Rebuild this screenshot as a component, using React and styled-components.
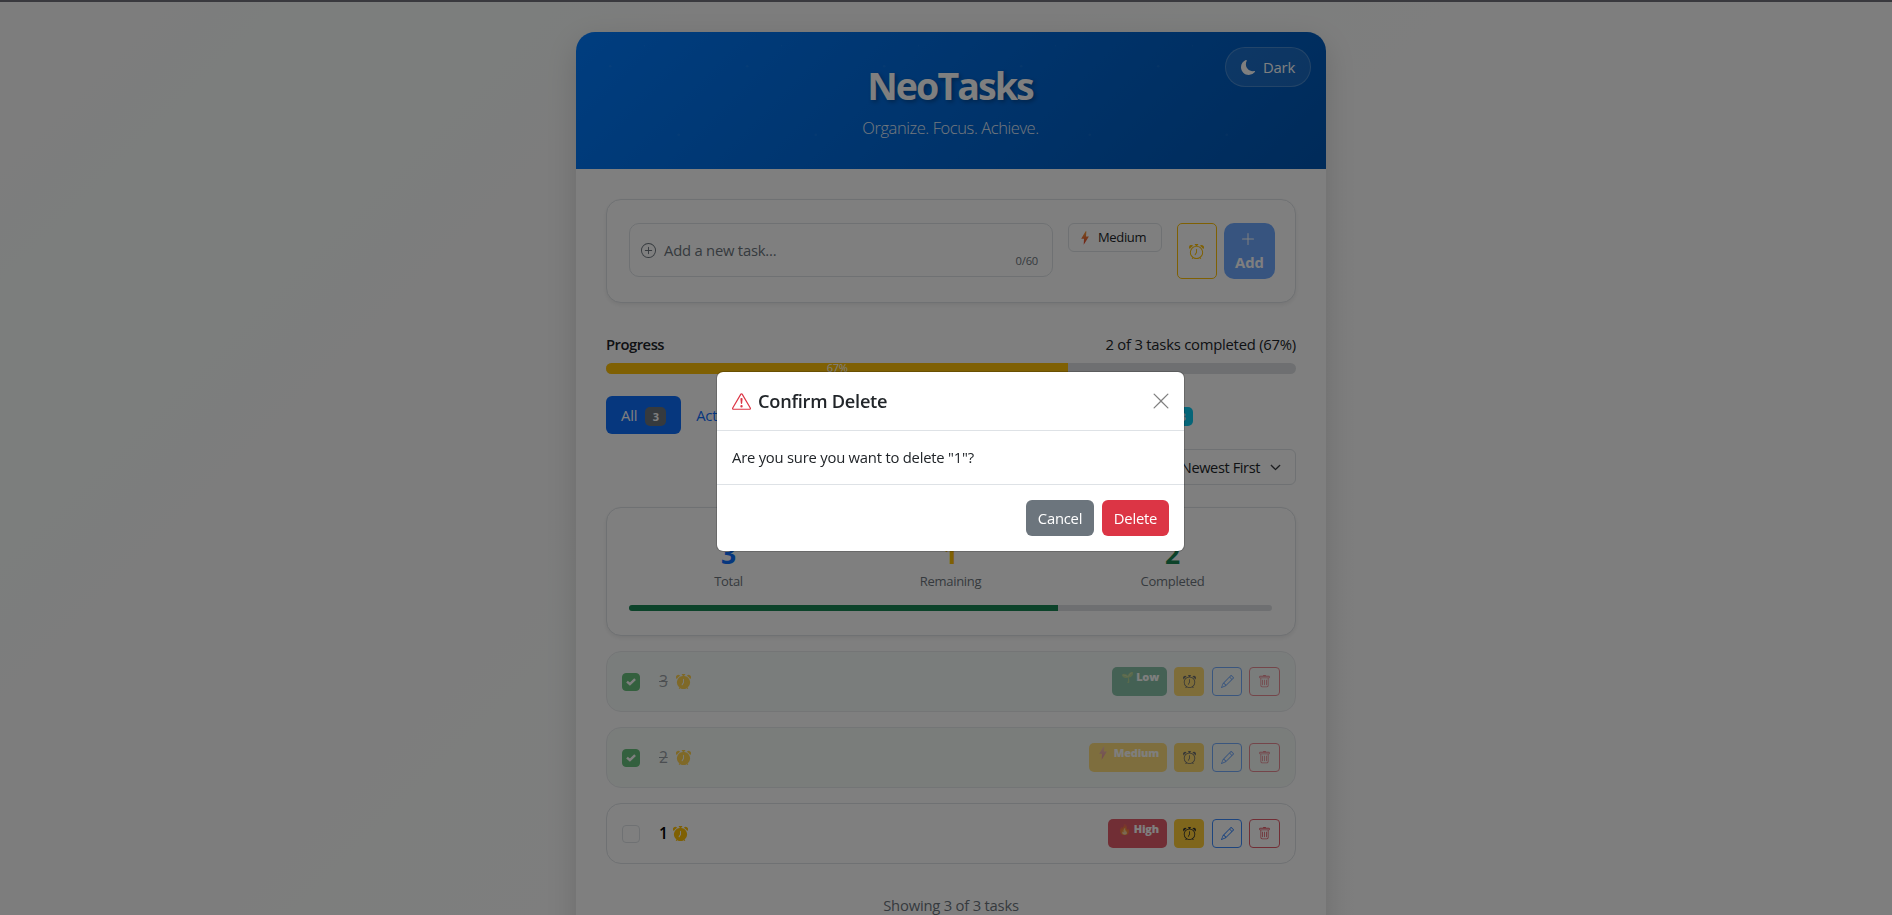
import React from 'react';
import styled, { createGlobalStyle, css } from 'styled-components';
import {
  BsMoonFill, BsPlusCircle, BsAlarm, BsAlarmFill, BsPlusLg, BsPencil, BsTrash,
  BsExclamationTriangle, BsXLg, BsChevronDown,
} from 'react-icons/bs';

const Global = createGlobalStyle`
  *, *::before, *::after { box-sizing: border-box; }
  html, body { height: 100%; overflow: hidden; }
  body {
    margin: 0;
    font-family: "Open Sans", "Noto Sans", sans-serif;
    font-size: 14.8px;
    line-height: 23px;
    letter-spacing: -0.22px;
    color: #212529;
  }
  button { font: inherit; letter-spacing: inherit; margin: 0; }
  h1, h2, p { margin: 0; }
  svg { display: block; flex: none; }
`;

const Page = styled.div`
  height: 100vh;
  overflow: hidden;
  border-top: 2px solid #73737d;
  padding: 30px 0 0 10px;
  background: linear-gradient(135deg, #fafafa 6%, #f8fcfa 10%, #f8fcfa 20%, #fafafa 25%, #fafafa 38%, #fafcfb 43%, #fcfcfc 52%, #fdfdfd 100%);
`;

const Card = styled.main`
  width: 750px;
  min-height: 1000px;
  margin: 0 auto;
  border-radius: 19px;
  overflow: hidden;
  background: #fff;
  box-shadow: 0 10px 30px rgba(0, 0, 0, 0.15);
`;

const Header = styled.header`
  position: relative;
  height: 137px;
  padding-top: 30px;
  text-align: center;
  color: #fff;
  background: linear-gradient(135deg, #007bff, #0056b3);
`;

const Grain = styled.svg`
  position: absolute;
  inset: 0;
`;

const Title = styled.h1`
  position: relative;
  padding-right: 2px;
  font-size: 37.5px;
  line-height: 48px;
  font-weight: 700;
  letter-spacing: -1.9px;
  text-shadow: 2px 2px 4px rgba(0, 0, 0, 0.3);
`;

const Subtitle = styled.p`
  position: relative;
  margin-top: 5px;
  padding-right: 1px;
  font-size: 16.5px;
  line-height: 26px;
  font-weight: 350;
  letter-spacing: -0.42px;
  opacity: 0.9;
`;

const ThemeButton = styled.button`
  position: absolute;
  top: 15px;
  right: 15px;
  display: flex;
  align-items: center;
  gap: 7px;
  height: 40px;
  padding: 0 15px;
  border: 1px solid rgba(255, 255, 255, 0.2);
  border-radius: 20px;
  background: rgba(255, 255, 255, 0.1);
  color: #fff;
`;

const Body = styled.div`
  padding: 30px;
`;

const Panel = styled.section`
  border: 1px solid #dee2e6;
  border-radius: 15px;
  padding: 23px 22px 0;
  background: #fff;
  box-shadow: 0 2px 4px rgba(0, 0, 0, 0.075);
`;

const Composer = styled(Panel)`
  display: flex;
  align-items: flex-start;
  height: 104px;
  padding-right: 20px;
`;

const TaskInput = styled.div`
  display: flex;
  align-items: center;
  gap: 8px;
  width: 424px;
  height: 54px;
  padding: 0 14px 0 11px;
  border: 1px solid #dee2e6;
  border-radius: 10px;
  color: #6c757d;
`;

const Counter = styled.span`
  align-self: flex-end;
  margin-left: auto;
  margin-bottom: 6px;
  font-size: 11.2px;
  line-height: 18px;
`;

const PrioritySelect = styled.div`
  display: flex;
  align-items: center;
  width: 94px;
  height: 29px;
  margin-left: 15px;
  padding-left: 7px;
  border: 1px solid #dee2e6;
  border-radius: 6px;
  font-size: 13px;
  letter-spacing: -0.35px;
`;

const Emoji = styled.span`
  display: inline-block;
  width: ${(p) => p.$width}px;
  font-size: ${(p) => p.$size}px;
  letter-spacing: 0;
  text-align: center;
  opacity: 0.75;
`;

const BoltIcon = styled.svg`
  width: 8px;
  height: 14px;
  margin: 0 ${(p) => p.$after}px 0 ${(p) => p.$before}px;
`;

const ReminderButton = styled.button`
  display: grid;
  place-items: center;
  width: 40px;
  height: 56px;
  margin-left: 15px;
  padding: 0 1px 0 0;
  border: 1px solid #ffc107;
  border-radius: 5px;
  background: transparent;
  color: #ffc107;
`;

const AddButton = styled.button`
  display: flex;
  flex-direction: column;
  align-items: center;
  width: 51px;
  height: 56px;
  margin-left: 7px;
  padding: 8px 0 0;
  border: 0;
  border-radius: 10px;
  background: #6ea8fe;
  color: #fff;
  font-weight: 700;
  letter-spacing: 0;
  line-height: 23px;
  gap: 4px;
  svg { margin-right: 3px; }
`;

const ProgressHead = styled.div`
  display: flex;
  justify-content: space-between;
  margin-top: 30px;
`;

const ProgressLabel = styled.span`
  font-weight: 600;
  letter-spacing: -0.5px;
`;

const Track = styled.div`
  height: ${(p) => p.$height}px;
  margin-top: ${(p) => p.$gap}px;
  border-radius: 6px;
  overflow: hidden;
  background: #dcdfe2;
`;

const Fill = styled.div`
  height: 100%;
  background: ${(p) => p.$color};
  color: #fff;
  font-size: 11px;
  line-height: 10px;
  text-align: center;
`;

const Tabs = styled.nav`
  display: flex;
  align-items: center;
  width: 602px;
  height: 38px;
  margin-top: 22px;
`;

const Tab = styled.button`
  display: flex;
  align-items: center;
  gap: 8px;
  height: 38px;
  padding: 0 15px;
  border: 0;
  border-radius: 6px;
  background: ${(p) => (p.$active ? '#0d6efd' : 'transparent')};
  color: ${(p) => (p.$active ? '#fff' : '#0d6efd')};
  &:last-child { margin-left: auto; }
`;

const Badge = styled.span`
  width: 21px;
  margin-top: 2px;
  border-radius: 5px;
  background: ${(p) => p.$bg};
  color: #fff;
  font-size: 11px;
  font-weight: 700;
  line-height: 19px;
  text-align: center;
`;

const SortSelect = styled.div`
  display: flex;
  align-items: center;
  justify-content: flex-end;
  gap: 10px;
  width: 166px;
  height: 36px;
  margin: 15px 0 0 auto;
  padding-right: 14px;
  border: 1px solid #dee2e6;
  border-radius: 6px;
  font-size: 14.6px;
  letter-spacing: -0.4px;
`;

const Stats = styled(Panel)`
  height: 129px;
  margin-top: 22px;
  padding: 29px 23px 0 22px;
`;

const StatRow = styled.div`
  display: grid;
  grid-template-columns: repeat(3, 222px);
  justify-content: center;
  text-align: center;
`;

const StatValue = styled.div`
  font-size: 26.5px;
  line-height: 34px;
  font-weight: 700;
  color: ${(p) => p.$color};
`;

const StatLabel = styled.div`
  font-size: 13px;
  line-height: 20px;
  letter-spacing: -0.3px;
  color: #6c757d;
`;

const TaskRow = styled.article`
  display: flex;
  align-items: center;
  height: 61px;
  margin-top: 15px;
  padding: 0 15px;
  border: 1px solid #dee2e6;
  border-radius: 15px;
  ${(p) => p.$done && css`
    background: #f1f8f5;
    opacity: 0.7;
  `}
`;

const Checkbox = styled.span`
  display: grid;
  place-items: center;
  width: 18px;
  height: 18px;
  border-radius: 4px;
  border: 1px solid ${(p) => (p.$checked ? '#28a745' : '#dee2e6')};
  background: ${(p) => (p.$checked ? '#28a745' : '#fff')};
`;

const TaskName = styled.span`
  display: flex;
  align-items: center;
  gap: ${(p) => (p.$done ? 8 : 5)}px;
  margin-left: 19px;
  font-size: 15.6px;
  font-weight: ${(p) => (p.$done ? 500 : 600)};
  color: ${(p) => (p.$done ? '#6c757d' : '#000')};
  svg { color: #ffc107; }
`;

const Actions = styled.div`
  display: flex;
  align-items: stretch;
  height: 29px;
  margin-left: auto;
  opacity: 0.8;
`;

const Priority = styled.span`
  display: flex;
  align-items: center;
  height: 29px;
  padding: 0 8px 9px ${(p) => p.$pad}px;
  border-radius: 5px;
  background: ${(p) => p.$bg};
  color: #fff;
  font-size: 11px;
  font-weight: 800;
  line-height: 18px;
  letter-spacing: -0.2px;
`;

const IconButton = styled.button`
  display: grid;
  place-items: center;
  width: ${(p) => p.$width || 30}px;
  margin-left: ${(p) => p.$gap || 7}px;
  padding: 0;
  border: 1px solid ${(p) => p.$color};
  border-radius: 4px;
  background: ${(p) => (p.$solid ? p.$color : 'transparent')};
  color: ${(p) => (p.$solid ? '#000' : p.$color)};
`;

const Showing = styled.p`
  margin-top: 30px;
  text-align: center;
  color: #6c757d;
`;

const Backdrop = styled.div`
  position: fixed;
  inset: 0;
  display: flex;
  justify-content: center;
  align-items: flex-start;
  padding: 371px 0 0 9px;
  background: rgba(0, 0, 0, 0.5);
`;

const Dialog = styled.div`
  width: 469px;
  border: 1px solid rgba(0, 0, 0, 0.175);
  border-radius: 7px;
  background: #fff;
  background-clip: padding-box;
`;

const DialogHeader = styled.div`
  display: flex;
  align-items: center;
  height: 59px;
  padding: 0 15px;
  border-bottom: 1px solid #dee2e6;
`;

const CloseIcon = styled(BsXLg)`
  margin: 0 -2px 0 auto;
  color: rgba(0, 0, 0, 0.5);
`;

const DialogTitle = styled.h2`
  display: flex;
  align-items: center;
  gap: 7px;
  font-size: 18.2px;
  line-height: 28px;
  font-weight: 550;
  letter-spacing: -0.25px;
  svg { color: #dc3545; }
`;

const DialogBody = styled.p`
  height: 54px;
  padding: 15px;
  border-bottom: 1px solid #dee2e6;
`;

const DialogFooter = styled.div`
  display: flex;
  justify-content: flex-end;
  gap: 8px;
  height: 66px;
  padding: 15px;
`;

const DialogButton = styled.button`
  width: ${(p) => p.$width}px;
  height: 36px;
  padding: 0;
  border: 0;
  border-radius: 6px;
  background: ${(p) => p.$bg};
  color: #fff;
`;

const GRAIN_TILES = [0, 1, 2, 3, 4, 5];

function HeaderGrain() {
  return (
    <Grain width="750" height="137" fill="#fff">
      {GRAIN_TILES.map((n) => (
        <g key={n} transform={`translate(${n * 137} 0) scale(1.37)`}>
          <circle cx="25" cy="25" r="1" opacity="0.05" />
          <circle cx="75" cy="75" r="1" opacity="0.05" />
          <circle cx="50" cy="10" r="0.5" opacity="0.05" />
        </g>
      ))}
    </Grain>
  );
}

function Bolt({ id, top, bottom, before, after }) {
  return (
    <BoltIcon viewBox="0 0 8 14" $before={before} $after={after}>
      <defs>
        <linearGradient id={id} x1="0" y1="0" x2="0" y2="1">
          <stop offset="0" stopColor={top} />
          <stop offset="1" stopColor={bottom} />
        </linearGradient>
      </defs>
      <path d="M4.6 0.3 0.2 7.8H3L2.7 13.7 7.9 5.6H5L5.4 0.3Z" fill={`url(#${id})`} />
    </BoltIcon>
  );
}

function Check() {
  return (
    <svg width="10" height="8" viewBox="0 0 10 8" fill="none" stroke="#fff" strokeWidth="2.4">
      <path d="M1 3.6 3.9 6.2 9.1 1.2" />
    </svg>
  );
}

const TASKS = [
  { name: '3', done: true, priority: 'Low' },
  { name: '2', done: true, priority: 'Medium' },
  { name: '1', done: false, priority: 'High' },
];

function PriorityBadge({ level }) {
  if (level === 'Low') {
    return <Priority $bg="#30946a" $pad={7}><Emoji $size={10.5} $width={17}>🌱</Emoji>Low</Priority>;
  }
  if (level === 'Medium') {
    return (
      <Priority $bg="#ffc71c" $pad={10}>
        <Bolt id="bolt-badge" top="#f3a36a" bottom="#d8455f" before={0} after={7} />Medium
      </Priority>
    );
  }
  return <Priority $bg="#dc3545" $pad={7}><Emoji $size={10.5} $width={19}>🔥</Emoji>High</Priority>;
}

function Task({ task }) {
  return (
    <TaskRow $done={task.done}>
      <Checkbox $checked={task.done}>{task.done && <Check />}</Checkbox>
      <TaskName $done={task.done}>
        {task.done ? <s>{task.name}</s> : <span>{task.name}</span>}
        <BsAlarmFill size={15} />
      </TaskName>
      <Actions>
        <PriorityBadge level={task.priority} />
        <IconButton $color="#ffc107" $solid><BsAlarm size={13} /></IconButton>
        <IconButton $color="#0d6efd" $gap={8}><BsPencil size={13} /></IconButton>
        <IconButton $color="#dc3545" $width={31}><BsTrash size={13} /></IconButton>
      </Actions>
    </TaskRow>
  );
}

export default function App() {
  return (
    <>
      <Global />
      <Page>
        <Card>
          <Header>
            <HeaderGrain />
            <Title>NeoTasks</Title>
            <Subtitle>Organize. Focus. Achieve.</Subtitle>
            <ThemeButton><BsMoonFill size={15} />Dark</ThemeButton>
          </Header>
          <Body>
            <Composer>
              <TaskInput>
                <BsPlusCircle size={15} />
                <span>Add a new task...</span>
                <Counter>0/60</Counter>
              </TaskInput>
              <PrioritySelect>
                <Bolt id="bolt-select" top="#f9a13c" bottom="#e0402f" before={5} after={9} />Medium
              </PrioritySelect>
              <ReminderButton><BsAlarm size={15} /></ReminderButton>
              <AddButton><BsPlusLg size={16} />Add</AddButton>
            </Composer>

            <ProgressHead>
              <ProgressLabel>Progress</ProgressLabel>
              <span>2 of 3 tasks completed (67%)</span>
            </ProgressHead>
            <Track $height={11} $gap={7}>
              <Fill $color="#ffc107" style={{ width: '67%' }}>67%</Fill>
            </Track>

            <Tabs>
              <Tab $active>All<Badge $bg="#6c757d">3</Badge></Tab>
              <Tab>Active<Badge $bg="#ffc107">1</Badge></Tab>
              <Tab>Completed<Badge $bg="#198754">2</Badge></Tab>
              <Tab>Reminders<Badge $bg="#0dcaf0">3</Badge></Tab>
            </Tabs>
            <SortSelect>Newest First<BsChevronDown size={11} strokeWidth={1} /></SortSelect>

            <Stats>
              <StatRow>
                <div><StatValue $color="#0d6efd">3</StatValue><StatLabel>Total</StatLabel></div>
                <div><StatValue $color="#ffc107">1</StatValue><StatLabel>Remaining</StatLabel></div>
                <div><StatValue $color="#198754">2</StatValue><StatLabel>Completed</StatLabel></div>
              </StatRow>
              <Track $height={6} $gap={14}>
                <Fill $color="#198754" style={{ width: '66.67%' }} />
              </Track>
            </Stats>

            {TASKS.map((t) => <Task key={t.name} task={t} />)}
            <Showing>Showing 3 of 3 tasks</Showing>
          </Body>
        </Card>
      </Page>

      <Backdrop>
        <Dialog>
          <DialogHeader>
            <DialogTitle><BsExclamationTriangle size={19} />Confirm Delete</DialogTitle>
            <CloseIcon size={20} />
          </DialogHeader>
          <DialogBody>Are you sure you want to delete &quot;1&quot;?</DialogBody>
          <DialogFooter>
            <DialogButton $bg="#6c757d" $width={68}>Cancel</DialogButton>
            <DialogButton $bg="#dc3545" $width={67}>Delete</DialogButton>
          </DialogFooter>
        </Dialog>
      </Backdrop>
    </>
  );
}
